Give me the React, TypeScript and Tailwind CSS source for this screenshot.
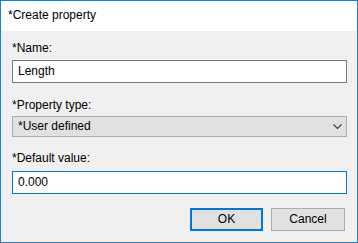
import React from "react";

export default function App() {
  const font = { fontFamily: '"Liberation Sans", Arial, sans-serif' };
  return (
    <div
      className="w-[358px] h-[243px] border border-[#1883d7] bg-[#f0f0f0] flex flex-col text-[12px] text-black"
      style={font}
    >
      <div className="h-[30px] bg-white flex items-center pl-[7px] text-[12px] leading-[15px] pb-[1px]">
        *Create property
      </div>
      <div className="flex flex-col pl-[11px] pr-[10px] pt-[10px]">
        <div className="leading-[15px] h-[15px]">*Name:</div>
        <div className="mt-[4px] h-[23px] border border-[#7a7a7a] bg-white flex items-center px-[5px] leading-[15px]">
          Length
        </div>
        <div className="mt-[15px] leading-[15px] h-[15px]">*Property type:</div>
        <div className="mt-[3px] h-[21px] border border-[#adadad] bg-[#e1e1e1] flex items-center justify-between pl-[5px] pr-[4px] leading-[15px]">
          <span>*User defined</span>
          <svg width="9" height="6" viewBox="0 0 9 6" fill="none">
            <path d="M0.5 0.5 L4.5 4.5 L8.5 0.5" stroke="#444" strokeWidth="1.2" />
          </svg>
        </div>
        <div className="mt-[14px] leading-[15px] h-[15px]">*Default value:</div>
        <div className="mt-[5px] h-[23px] border border-[#0078d7] bg-white flex items-center px-[5px] leading-[15px]">
          0.000
        </div>
        <div className="mt-[14px] flex justify-end gap-[8px] pr-[2px]">
          <button className="w-[73px] h-[23px] border-2 border-[#0078d7] bg-[#e1e1e1] flex items-center justify-center leading-[15px]">
            OK
          </button>
          <button className="w-[74px] h-[23px] border border-[#adadad] bg-[#e1e1e1] flex items-center justify-center leading-[15px]">
            Cancel
          </button>
        </div>
      </div>
    </div>
  );
}
